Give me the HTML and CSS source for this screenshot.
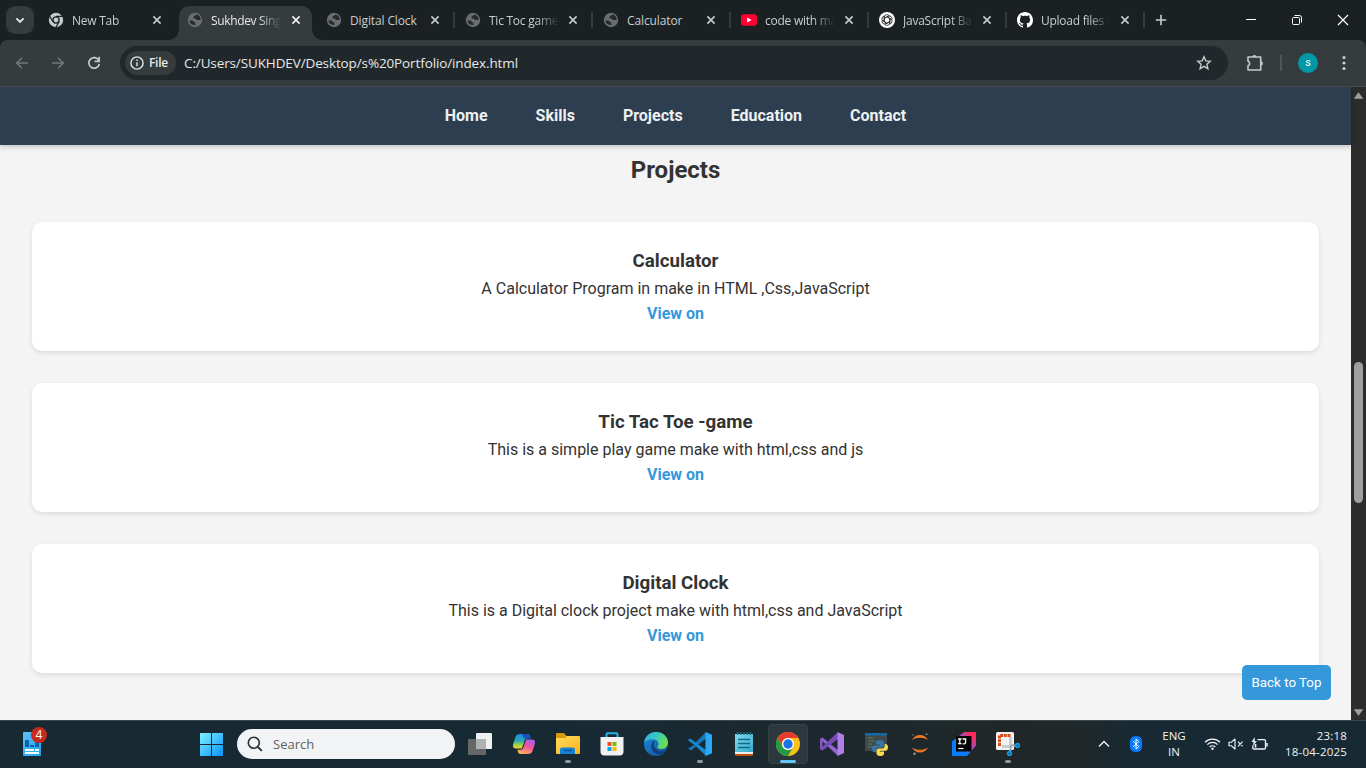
FILE: index.html
```html
<!DOCTYPE html>
<html lang="en">
<head>
<meta charset="utf-8">
<title>Sukhdev Singh Portfolio</title>
<link rel="stylesheet" href="styles.css">
</head>
<body>
<svg class="defs" width="0" height="0">
  <defs>
    <linearGradient id="gWin" x1="0" y1="0" x2="1" y2="1"><stop offset="0" stop-color="#7df3ff"/><stop offset="1" stop-color="#0a90fb"/></linearGradient>
    <linearGradient id="gWidget" x1="0" y1="0" x2="1" y2="1"><stop offset="0" stop-color="#62bdf6"/><stop offset="1" stop-color="#1ba4ec"/></linearGradient>
    <linearGradient id="gCopL" x1="0" y1="0" x2="0" y2="1"><stop offset="0" stop-color="#198fe8"/><stop offset=".45" stop-color="#25a7b5"/><stop offset=".75" stop-color="#9bd34b"/><stop offset="1" stop-color="#f6d22b"/></linearGradient>
    <linearGradient id="gCopR" x1="0.8" y1="0" x2="0.3" y2="1"><stop offset="0" stop-color="#a45bf0"/><stop offset=".5" stop-color="#ee5898"/><stop offset="1" stop-color="#ffb05a"/></linearGradient>
    <linearGradient id="gFold" x1="0" y1="0" x2="1" y2="1"><stop offset="0" stop-color="#ffdc62"/><stop offset="1" stop-color="#fbb318"/></linearGradient>
    <linearGradient id="gEdge1" x1="0" y1="0" x2="1" y2=".5"><stop offset="0" stop-color="#2dabeb"/><stop offset=".5" stop-color="#36c9c0"/><stop offset="1" stop-color="#69df54"/></linearGradient>
    <linearGradient id="gEdge2" x1="0" y1="0" x2="1" y2="1"><stop offset="0" stop-color="#1c8fe0"/><stop offset="1" stop-color="#114a91"/></linearGradient>
    <linearGradient id="gNote" x1="0" y1="0" x2="1" y2="1"><stop offset="0" stop-color="#83dcf0"/><stop offset="1" stop-color="#33a9c9"/></linearGradient>
    <linearGradient id="gIj" x1="0" y1="1" x2="1" y2="0"><stop offset=".35" stop-color="#087cfa"/><stop offset=".6" stop-color="#a64ac4"/><stop offset=".85" stop-color="#fe2857"/></linearGradient>
    <symbol id="close" viewBox="0 0 10 10"><path d="M1.4 1.4l7.2 7.2M8.6 1.4L1.4 8.6" fill="none" stroke="currentColor" stroke-width="1.6"/></symbol>
    <symbol id="globe" viewBox="0 0 16 16"><circle cx="8" cy="8" r="7.2" fill="#696c70"/><path d="M2.4 8.600h2.800c1 0 1.600.8 1.600 1.700h1.500v2.600c-3 .6-5.600-1.300-5.900-4.300zM9.300 2.500C8.800 4 6.900 3.600 6.400 4.900c-.4 1.200.6 1.600 1.800 1.600 1 0 .9 1.600 2.200 1.600h3.200C14 5.400 12 3 9.300 2.500z" fill="#262c2e"/></symbol>
  </defs>
</svg>

<header class="tabstrip">
  <button class="tab-search"><svg width="10" height="7" viewBox="0 0 10 7"><path d="M1.400 1.300L5 4.900l3.600-3.600" fill="none" stroke="#e6e9ea" stroke-width="1.800"/></svg></button>
  <div class="tabs">
    <div class="tab wide">
      <svg class="fav" viewBox="0 0 16 16"><circle cx="8" cy="8" r="7.200" fill="#c5cbce"/><circle cx="8" cy="8" r="3.700" fill="#1b2123"/><circle cx="8" cy="8" r="2.400" fill="#c5cbce"/><path d="M8 4.400h6.600M4.900 9.800L1.700 4.300M11.100 9.800L7.900 15.300" stroke="#1b2123" stroke-width="1.200"/></svg>
      <span class="title">New Tab</span><svg class="x"><use href="#close"/></svg>
    </div>
    <div class="tab wide active"><svg class="fav"><use href="#globe"/></svg><span class="title">Sukhdev Sing</span><svg class="x"><use href="#close"/></svg></div>
    <div class="tab wide"><svg class="fav"><use href="#globe"/></svg><span class="title full">Digital Clock</span><svg class="x"><use href="#close"/></svg></div>
    <div class="tab sep"><svg class="fav"><use href="#globe"/></svg><span class="title">Tic Toc game</span><svg class="x"><use href="#close"/></svg></div>
    <div class="tab sep"><svg class="fav"><use href="#globe"/></svg><span class="title full">Calculator</span><svg class="x"><use href="#close"/></svg></div>
    <div class="tab sep"><svg class="fav" viewBox="0 0 16 16"><rect y="2.200" width="16" height="11.600" rx="3" fill="#ff0033"/><path d="M6.200 5.500v5L10.600 8z" fill="#fff"/></svg><span class="title">code with ma</span><svg class="x"><use href="#close"/></svg></div>
    <div class="tab sep"><svg class="fav" viewBox="0 0 16 16"><circle cx="8" cy="8" r="8" fill="#fff"/><g fill="none" stroke="#222" stroke-width=".8"><path id="knot" d="M5.300 8.900V5.200a2.700 2.700 0 0 1 5-1.300M5.300 6.300L8.500 4.400a2.600 2.600 0 0 1 1.500-.3"/><use href="#knot" transform="rotate(60 8 8)"/><use href="#knot" transform="rotate(120 8 8)"/><use href="#knot" transform="rotate(180 8 8)"/><use href="#knot" transform="rotate(240 8 8)"/><use href="#knot" transform="rotate(300 8 8)"/></g></svg><span class="title">JavaScript Ba</span><svg class="x"><use href="#close"/></svg></div>
    <div class="tab sep"><svg class="fav" viewBox="0 0 16 16"><path fill="#fff" d="M8 0C3.580 0 0 3.580 0 8c0 3.540 2.290 6.530 5.470 7.590.4.070.55-.17.55-.38 0-.19-.01-.82-.01-1.490-2.010.37-2.530-.49-2.690-.94-.09-.23-.48-.94-.82-1.130-.28-.15-.68-.52-.01-.53.63-.01 1.080.58 1.230.82.72 1.210 1.870.87 2.330.66.07-.52.28-.87.51-1.070-1.780-.2-3.640-.89-3.640-3.950 0-.87.31-1.590.82-2.150-.08-.2-.36-1.020.08-2.120 0 0 .67-.21 2.200.82.64-.18 1.320-.27 2-.27s1.360.09 2 .27c1.530-1.040 2.200-.82 2.200-.82.44 1.100.16 1.920.08 2.120.51.56.82 1.270.82 2.150 0 3.070-1.870 3.750-3.650 3.950.29.25.54.73.54 1.480 0 1.070-.01 1.930-.01 2.200 0 .21.15.46.55.38A8.010 8.010 0 0016 8c0-4.420-3.580-8-8-8z"/></svg><span class="title">Upload files ·</span><svg class="x"><use href="#close"/></svg></div>
    <button class="new-tab sep"><svg width="12" height="12" viewBox="0 0 12 12"><path d="M6 .8v10.400M.8 6h10.400" stroke="#c7cdd0" stroke-width="1.600"/></svg></button>
  </div>
  <div class="window-controls">
    <svg width="12" height="12" viewBox="0 0 12 12"><path d="M1 5.500h10" stroke="#fff"/></svg>
    <svg width="12" height="12" viewBox="0 0 12 12" fill="none" stroke="#fff"><rect x="1.500" y="3.500" width="7" height="7" rx="1"/><path d="M3.500 1.500h5a2 2 0 0 1 2 2v5"/></svg>
    <svg width="12" height="12" viewBox="0 0 12 12"><path d="M1 1l10 10M11 1L1 11" stroke="#fff" stroke-width="1.200"/></svg>
  </div>
</header>

<div class="toolbar">
  <svg class="nav-icon" viewBox="0 0 16 16"><path d="M14 8H3M8 2.700L2.700 8 8 13.300" fill="none" stroke="#74797b" stroke-width="1.500"/></svg>
  <svg class="nav-icon" viewBox="0 0 16 16"><path d="M2 8h11M8 2.700L13.300 8 8 13.300" fill="none" stroke="#74797b" stroke-width="1.500"/></svg>
  <svg class="nav-icon" viewBox="0 0 16 16"><path d="M12.900 5.600A5.300 5.300 0 1 0 13.300 9" fill="none" stroke="#c7cdd0" stroke-width="1.700"/><path d="M13.100 1.800v4.600H8.600" fill="none" stroke="#c7cdd0" stroke-width="1.700"/></svg>
  <div class="omnibox">
    <span class="chip"><svg width="14" height="14" viewBox="0 0 14 14"><circle cx="7" cy="7" r="6.100" fill="none" stroke="#dfe3e4" stroke-width="1.400"/><path d="M7 6.200v4M7 3.500v1.500" stroke="#dfe3e4" stroke-width="1.400"/></svg><span class="chip-label">File</span></span>
    <span class="url">C:/Users/SUKHDEV/Desktop/s%20Portfolio/index.html</span>
    <svg class="star" width="16" height="16" viewBox="0 0 16 16"><path d="M8 1.800l1.800 4.100 4.500.4-3.400 3 1 4.400L8 11.400l-3.900 2.300 1-4.400-3.400-3 4.500-.4z" fill="none" stroke="#c7c9c9" stroke-width="1.400"/></svg>
  </div>
  <div class="toolbar-right">
    <svg width="18" height="18" viewBox="0 0 18 18"><path d="M2 3h12.700v13H2v-4.200a2.400 2.400 0 0 0 0-4.600z" fill="none" stroke="#c4cacd" stroke-width="1.600" stroke-linejoin="round"/><path d="M14.700 7.200a2.200 2.200 0 0 1 0 4.400zM6.300 3a2.100 2.100 0 0 1 4.200 0z" fill="#c4cacd"/></svg>
    <i class="divider"></i>
    <span class="avatar">s</span>
    <svg width="4" height="16" viewBox="0 0 4 16" fill="#c7cdd0"><circle cx="2" cy="2.500" r="1.600"/><circle cx="2" cy="8" r="1.600"/><circle cx="2" cy="13.500" r="1.600"/></svg>
  </div>
</div>

<div class="viewport">
  <div class="page">
    <nav class="site-nav"><a>Home</a><a>Skills</a><a>Projects</a><a>Education</a><a>Contact</a></nav>
    <main class="projects">
      <h2>Projects</h2>
      <article class="card"><h3>Calculator</h3><p>A Calculator Program in make in HTML ,Css,JavaScript</p><a>View on</a></article>
      <article class="card"><h3>Tic Tac Toe -game</h3><p>This is a simple play game make with html,css and js</p><a>View on</a></article>
      <article class="card"><h3>Digital Clock</h3><p>This is a Digital clock project make with html,css and JavaScript</p><a>View on</a></article>
    </main>
    <button class="to-top">Back to Top</button>
  </div>
  <div class="scrollbar">
    <svg width="9" height="7" viewBox="0 0 9 7"><path d="M4.500.5L8.800 6.500H.2z" fill="#9f9f9f" stroke="#9f9f9f" stroke-width=".5" stroke-linejoin="round"/></svg>
    <i class="thumb"></i>
    <svg width="9" height="7" viewBox="0 0 9 7"><path d="M4.500 6.500L8.800.5H.2z" fill="#9f9f9f" stroke="#9f9f9f" stroke-width=".5" stroke-linejoin="round"/></svg>
  </div>
</div>

<footer class="taskbar">
  <div class="widgets">
    <svg width="18" height="24" viewBox="0 0 18 24"><rect width="18" height="24" rx="1" fill="url(#gWidget)"/><path d="M2 8h4v7H2zM7 13h4v2H7zM12 10h4v5h-4z" fill="#0864b0"/><path d="M2 17h9v2H2zM12 17h4v2h-4zM2 20h14v2H2z" fill="#f4fbff"/></svg>
    <span class="badge">4</span>
  </div>
  <svg class="start" width="23" height="23" viewBox="0 0 23 23"><path d="M0 0h11v11H0zM12 0h11v11H12zM0 12h11v11H0zM12 12h11v11H12z" fill="url(#gWin)"/></svg>
  <div class="search"><svg width="16" height="16" viewBox="0 0 16 16"><circle cx="6.800" cy="6.800" r="5.500" fill="none" stroke="#2c2d2e" stroke-width="1.600"/><path d="M10.800 10.800l4 4" stroke="#2c2d2e" stroke-width="1.900"/></svg><span>Search</span></div>
  <div class="apps">
    <div class="app"><svg viewBox="0 0 24 24"><rect x="8" y="1" width="16" height="16" rx="1" fill="#eff0f0"/><rect x="0" y="7" width="18" height="16" rx="1" fill="#646667"/><path d="M8 7h10v10H8z" fill="#b0b1b1"/></svg></div>
    <div class="app"><svg viewBox="0 0 24 24"><path d="M8 2h7.500c1.500 0 2.200 1 2.500 2l.7 2.300H15c-1.300 0-2 .8-2.400 2L10 16.500H4c-2.400 0-3.600-1.500-2.900-4L3.400 5C4.100 3 5.500 2 8 2z" fill="url(#gCopL)"/><path d="M9 2h6.500c1.500 0 2.200 1 2.500 2l.7 2.300H13C10.500 6.300 11.500 2.500 9 2z" fill="#174ec1"/><path d="M16 22H8.500C7 22 6.300 21 6 20l-.7-2.300H9c1.300 0 2-.8 2.400-2L14 7.500h6c2.400 0 3.600 1.500 2.900 4L20.600 19c-.7 2-2.100 3-4.600 3z" fill="url(#gCopR)"/></svg></div>
    <div class="app running"><svg viewBox="0 0 24 24"><path d="M0 2q0-1 1-1h7l2.500 3H23v5H0z" fill="#d89808"/><path d="M0 7q0-1 1-1h8l2-2h12q1 0 1 1v16q0 1-1 1H1q-1 0-1-1z" fill="url(#gFold)"/><path d="M4 22v-4.500q0-2 2-2h11q2 0 2 2V22z" fill="#1583d1"/><path d="M8 18.500h8" stroke="#0857a0" stroke-width="1.500"/></svg></div>
    <div class="app"><svg viewBox="0 0 24 24"><path d="M6.500 7V2q0-.8.800-.8h9.400q.8 0 .8.800v5" fill="none" stroke="#27aee8" stroke-width="2"/><path d="M.5 5h23v14.500q0 4-4 4h-15q-4 0-4-4z" fill="#f1f1f3"/><path fill="#f25022" d="M7.500 10h4v4h-4z"/><path fill="#7fba00" d="M12.500 10h4v4h-4z"/><path fill="#00a4ef" d="M7.500 15h4v4h-4z"/><path fill="#ffb900" d="M12.500 15h4v4h-4z"/></svg></div>
    <div class="app"><svg viewBox="0 0 24 24"><circle cx="12" cy="12" r="12" fill="url(#gEdge2)"/><path d="M.2 10.500C1 4.500 5.600 0 12 0c7 0 12 4.800 12 10.500 0 4-3 6.400-6.400 6.400-2.800 0-4.300-1-4.300-2 0-.7 1.200-1.200 1.200-3 0-2.600-2.500-4.700-6-4.700-4 0-7.500 2-8.300 3.300z" fill="url(#gEdge1)"/><path d="M9.600 9c-3.500 2.600-3 9 1.200 11.800 3.400 2.200 8 1.500 11.200-2.300-3.600 1.700-7.500 1-9.800-1.300C9.500 14.800 9.300 11.500 11 9.300z" fill="#123f80"/><path d="M21.900 18.700l2.600-3.900v7l-5 2c1-.9 2-2.900 2.400-5.100z" fill="#17292f"/></svg></div>
    <div class="app running"><svg viewBox="0 0 24 24"><path d="M0 8.300l2-1.700 5.500 4L18 0v6.500l-15 12-3-2 8-4.500z" fill="#1478bd"/><path d="M0 8.300l2-1.700L18 18v6L7.500 13.800z" fill="#1689d4"/><path d="M17.500 0L24 2.800v18.400L17.500 24z" fill="#2ca9f4"/></svg></div>
    <div class="app"><svg viewBox="0 0 24 24"><path d="M3 20h18v3q0 1-1 1H4q-1 0-1-1z" fill="#b9500d"/><path d="M3 19h18v3H3z" fill="#eee"/><path d="M3 2h18v18H3z" fill="url(#gNote)"/><path d="M5.500 0v3M8.700 0v3M12 0v3M15.300 0v3M18.500 0v3" stroke="#147791" stroke-width="1.400"/><path d="M6 7.500h12M6 11.500h12M6 15.500h12" stroke="#136b88" stroke-width="1.500"/></svg></div>
    <div class="app selected"><svg viewBox="0 0 24 24"><circle cx="12" cy="12" r="12" fill="#fbc116"/><path d="M1.600 6a12 12 0 0 1 20.800 0H12a6 6 0 0 0-5.200 9z" fill="#e33b2e"/><path d="M1.600 6a12 12 0 0 0 10.400 18l5.200-9a6 6 0 0 1-10.400 0z" fill="#229a46"/><circle cx="12" cy="12" r="6" fill="#fff"/><circle cx="12" cy="12" r="4.700" fill="#1a73e8"/></svg></div>
    <div class="app"><svg viewBox="0 0 24 24"><path d="M0 7l2.500-1.500L18 18v6z" fill="#9262d0"/><path d="M0 7l2.500-1.500V18.500L0 17z" fill="#8456c4"/><path d="M0 17L18 0v7L2.500 18.500z" fill="#794cb5"/><path d="M17.500 0L24 3v18l-6.500 3z" fill="#b17eea"/></svg></div>
    <div class="app"><svg viewBox="0 0 24 24"><path d="M1 1h22v18H1z" fill="#42484a"/><path d="M1 1h22v2.500H1z" fill="#1369a8"/><path d="M4 6h5M4 9h7M4 12h4M4 15h5" stroke="#568058" stroke-width="1"/><path d="M15.500 8c-3 0-3.500 1-3.500 3v1.500h4v1h-5.500c-2 0-2.500 1.700-2.500 3.500s.8 3.300 2.300 3.300H12V18c0-1.800 1.200-2.500 2.500-2.500h3.500c1.300 0 2-.9 2-2V11c0-2-1.500-3-4.500-3z" fill="#3776ab"/><path d="M16.500 24c3 0 3.500-1 3.500-3v-1.500h-4v-.8h5.200c2 0 2.800-1.600 2.800-3.500s-.8-3.200-2.500-3.200h-.8v2c0 1.600-1 2.500-2.300 2.500H15c-1.300 0-2.500.9-2.500 2.300V21c0 2 1 3 4 3z" fill="#ffd94b"/></svg></div>
    <div class="app"><svg viewBox="0 0 24 24"><path d="M4 8c2-3.400 4.700-5 8-5s6 1.600 8 5c-2.500-1.600-5-2.300-8-2.300S6.500 6.400 4 8zM4 15.500c2 3.400 4.700 5 8 5s6-1.600 8-5c-2.500 1.600-5 2.300-8 2.300s-5.500-.7-8-2.300z" fill="#f37726"/><circle cx="18.500" cy="2.300" r="1" fill="#7f8588"/><circle cx="6.500" cy="21.700" r="1.200" fill="#9b9ea0"/><circle cx="5" cy="3" r=".8" fill="#72777a"/></svg></div>
    <div class="app"><svg viewBox="0 0 24 24"><path d="M0 9.500L11.500.5Q12 0 13 0h10q1 0 1 1v12q0 .6-.4 1L16 23q-.8 1-1.600 1H1q-1 0-1-1z" fill="url(#gIj)"/><path d="M4 4h15.500v15.500H4z" fill="#050505"/><path d="M6 7h3.600M7.800 7v4.600M6 11.600h3.600M10.600 7h3v3.200q0 1.600-1.600 1.600h-1.200" fill="none" stroke="#fff" stroke-width="1.300"/><path d="M6.300 16.500h5.200" stroke="#fff" stroke-width="1.200"/></svg></div>
    <div class="app running"><svg viewBox="0 0 24 24"><rect width="18" height="18" rx="1.500" fill="#f2f2f3"/><path d="M3.500 14V3.500H15" fill="none" stroke="#d94b19" stroke-width="3" stroke-dasharray="3 .7"/><path d="M14.500 5v9.500H6" fill="none" stroke="#c3c7cb" stroke-width="2.600"/><path d="M15 13l5 1M15 14l-1 6" stroke="#9babb3" stroke-width="2"/><circle cx="21.500" cy="13.500" r="1.700" fill="none" stroke="#1697e0" stroke-width="2"/><circle cx="13.500" cy="21.500" r="1.700" fill="none" stroke="#1697e0" stroke-width="2"/></svg></div>
  </div>
  <div class="tray">
    <svg width="12" height="8" viewBox="0 0 12 8"><path d="M1 6.500l5-5 5 5" fill="none" stroke="#f2f4f5" stroke-width="1.400"/></svg>
    <svg class="bt" width="12" height="16" viewBox="0 0 12 16"><rect width="12" height="16" rx="5.500" fill="#087dfb"/><path d="M3.200 5.200l5.600 5.500L6 13V3l2.800 2.400-5.600 5.400" fill="none" stroke="#fff" stroke-width="1"/></svg>
    <div class="lang"><span>ENG</span><span>IN</span></div>
    <svg class="wifi" width="17" height="14" viewBox="0 0 17 14"><path d="M1 5.200a10.700 10.700 0 0 1 15 0M3.300 7.600a7.400 7.400 0 0 1 10.400 0M5.700 10a4 4 0 0 1 5.600 0" fill="none" stroke="#f2f4f5" stroke-width="1.200"/><circle cx="8.500" cy="11.800" r="1.200" fill="#f2f4f5"/></svg>
    <svg class="sound" width="16" height="12" viewBox="0 0 16 12"><path d="M1 4.200h2.500L7 1v10L3.500 7.800H1zM10 3.700l4.600 4.600M14.600 3.700L10 8.300" fill="none" stroke="#f2f4f5" stroke-width="1.100" stroke-linejoin="round"/></svg>
    <svg class="battery" width="17" height="14" viewBox="0 0 17 14"><path d="M6.500 2.600h6.800q1.200 0 1.200 1.200v6.900q0 1.300-1.200 1.300H3q-1.200 0-1.200-1.200V8.500" fill="none" stroke="#f2f4f5" stroke-width="1.300"/><path d="M16 6v3.500" stroke="#f2f4f5" stroke-width="1.500"/><path d="M3.700 0L.6 5h2.200L1.600 9 6 4.200H3.700z" fill="#f2f4f5"/><path d="M4.500 7v3.500" stroke="#f2f4f5" stroke-width="1.700"/></svg>
    <div class="clock"><span>23:18</span><span>18-04-2025</span></div>
  </div>
</footer>
</body>
</html>
```
FILE: styles.css
```css
* { box-sizing: border-box; }
body {
  margin: 0;
  width: 1366px;
  height: 768px;
  overflow: hidden;
  display: flex;
  flex-direction: column;
  background: #1b2123;
  font-family: "Open Sans", "Noto Sans", sans-serif;
}
button { border: 0; padding: 0; background: none; font: inherit; }
svg { display: block; flex: none; }
.defs { position: absolute; }

/* Tab strip */
.tabstrip {
  height: 40px;
  flex: none;
  display: flex;
  align-items: center;
  padding-left: 6px;
}
.tab-search {
  width: 28px;
  height: 28px;
  border-radius: 9px;
  background: #363c3e;
  display: grid;
  place-items: center;
}
.tabs { display: flex; height: 40px; margin-left: 6px; align-items: flex-end; }
.tab {
  position: relative;
  width: 138px;
  height: 34px;
  padding: 0 0 6px 8px;
  display: flex;
  align-items: center;
}
.tab.wide { width: 139px; }
.tab.active::before {
  content: "";
  position: absolute;
  inset: 0 6px 0 0;
  background: #363c3e;
  border-radius: 10px 10px 0 0;
}
.tab.active::after {
  content: "";
  position: absolute;
  left: -10px;
  right: -4px;
  bottom: 0;
  height: 10px;
  background:
    radial-gradient(circle at 0 0, transparent 9.500px, #363c3e 10px) left / 10px 10px no-repeat,
    radial-gradient(circle at 100% 0, transparent 9.500px, #363c3e 10px) right / 10px 10px no-repeat;
}
.tab.active > * { position: relative; z-index: 1; }
.sep::before {
  content: "";
  position: absolute;
  left: -4px;
  top: 6px;
  width: 2px;
  height: 16px;
  background: #363c3e;
}
.fav { width: 16px; height: 16px; }
.title {
  width: 70px;
  margin-left: 8px;
  white-space: nowrap;
  font-size: 12px;
  letter-spacing: -0.250px;
  line-height: 18px;
  padding-top: 1px;
  color: #c7cdd0;
  -webkit-mask-image: linear-gradient(90deg, #000 68%, transparent 100%);
  mask-image: linear-gradient(90deg, #000 68%, transparent 100%);
}
.title.full { -webkit-mask-image: none; mask-image: none; letter-spacing: -0.120px; }
.active .title { color: #e6e9ea; letter-spacing: -0.350px; }
.x { width: 10px; height: 10px; margin-left: 9px; color: #c7cdd0; }
.wide .x { margin-left: 10px; }
.active .x { color: #f0f2f2; }
.new-tab { position: relative; width: 24px; height: 28px; margin-bottom: 6px; padding-left: 8px; display: flex; align-items: center; }
.window-controls { display: flex; gap: 34px; margin-left: auto; padding-right: 17px; }

/* Toolbar */
.toolbar {
  height: 47px;
  flex: none;
  display: flex;
  align-items: center;
  padding: 0 20px 1px 14px;
  background: #363c3e;
  border-bottom: 1px solid #4a4b4a;
  border-radius: 8px 8px 0 0;
}
.nav-icon { width: 16px; height: 16px; margin-right: 20px; }
.nav-icon + .nav-icon + .nav-icon { margin-right: 18px; }
.omnibox {
  width: 1108px;
  height: 34px;
  border-radius: 17px;
  background: #20282b;
  display: flex;
  align-items: center;
  padding: 0 16px 0 5px;
}
.chip {
  height: 24px;
  width: 51px;
  border-radius: 12px;
  background: #363c3e;
  display: flex;
  align-items: center;
  gap: 5px;
  padding-left: 5px;
}
.chip-label { color: #e6e9ea; font-size: 12px; font-weight: 600; line-height: 16px; letter-spacing: -0.300px; }
.url { margin-left: 8px; color: #e6e9ea; font-size: 13.500px; line-height: 18px; white-space: nowrap; letter-spacing: -0.120px; }
.star { margin-left: auto; }
.toolbar-right { flex: 1; display: flex; align-items: center; padding-left: 18px; }
.divider { width: 2px; height: 16px; margin-left: 16px; background: #4e5457; }
.avatar {
  width: 20px;
  height: 20px;
  margin: 0 24px 0 16px;
  border-radius: 50%;
  background: #0097a7;
  color: #fff;
  font: 11px/19px Roboto, sans-serif;
  text-align: center;
}

/* Web page */
.viewport { flex: 1; min-height: 0; display: flex; }
.page {
  position: relative;
  flex: 1;
  background: #f4f4f4;
  color: #333;
  font-family: Roboto, sans-serif;
  font-size: 16px;
  line-height: 25.600px;
  text-align: center;
}
.site-nav {
  position: relative;
  height: 58px;
  display: flex;
  justify-content: center;
  align-items: center;
  gap: 48px;
  background: #2c3e50;
  box-shadow: 0 2px 5px rgba(0, 0, 0, .2);
  color: #ecf0f1;
  font-weight: 700;
}
.projects { padding: 6px 32px 0; display: flex; flex-direction: column; gap: 32px; }
.projects h2 { margin: 0; font-size: 24px; line-height: 39px; font-weight: 700; }
.card {
  height: 129px;
  padding: 24px;
  border-radius: 10px;
  background: #fff;
  box-shadow: 0 2px 5px rgba(0, 0, 0, .1);
}
.card h3 { margin: 0 0 -1px; font-size: 18.720px; line-height: 31px; font-weight: 700; }
.card p { margin: 0; line-height: 25px; }
.card a { display: block; line-height: 25px; color: #3498db; font-weight: 700; }
.to-top {
  position: absolute;
  right: 20px;
  bottom: 20px;
  width: 89px;
  height: 35px;
  border-radius: 5px;
  background: #3498db;
  color: #fff;
  font: 13.333px Roboto, sans-serif;
}
.scrollbar {
  width: 15px;
  padding: 5px 0 4px;
  background: #2c2c2c;
  display: flex;
  flex-direction: column;
  align-items: center;
}
.thumb { width: 9px; height: 141px; margin: 263px 0 auto; border-radius: 5px; background: #9f9f9f; }

/* Taskbar */
.taskbar {
  height: 48px;
  flex: none;
  display: flex;
  align-items: center;
  padding-bottom: 1px;
  border-top: 1px solid #3c4b50;
  background: linear-gradient(90deg, #172a34 0, #172a34 560px, #1d282c 860px, #222727 1060px, #172a33 1130px, #172a33);
  color: #f2f4f5;
}
.widgets { position: relative; margin-left: 23px; width: 18px; }
.badge {
  position: absolute;
  left: 8px;
  top: -5px;
  width: 16px;
  height: 16px;
  border-radius: 50%;
  background: #c42b1c;
  color: #fff;
  font-size: 12px;
  line-height: 16px;
  text-align: center;
}
.start { margin-left: 159px; }
.search {
  width: 218px;
  height: 30px;
  margin: 0 3px 0 14px;
  padding-left: 10px;
  border-radius: 15px;
  background: #f2f3f5;
  display: flex;
  align-items: center;
  gap: 10px;
  color: #606264;
  font-size: 13px;
  line-height: 18px;
}
.apps { display: flex; }
.app { position: relative; width: 44px; height: 40px; display: grid; place-items: center; }
.app > svg { width: 24px; height: 24px; }
.running::after, .selected::after {
  content: "";
  position: absolute;
  bottom: 1px;
  left: 19px;
  width: 6px;
  height: 3px;
  border-radius: 2px;
  background: #92999c;
}
.selected::after { left: 14px; width: 16px; background: #5fc4fa; }
.selected::before {
  content: "";
  position: absolute;
  inset: 0 2px;
  border: 1px solid #344145;
  border-radius: 4px;
  background: #2c383d;
}
.selected > svg { position: relative; }
.tray { flex: 1; display: flex; align-items: center; padding: 0 19px 0 68px; font-size: 11.500px; line-height: 16px; }
.bt { margin-left: 20px; }
.lang { width: 32px; margin-left: 16px; display: flex; flex-direction: column; align-items: center; }
.wifi { margin-left: 14px; }
.sound { margin-left: 7px; }
.battery { margin-left: 7px; }
.clock { margin-left: auto; display: flex; flex-direction: column; align-items: flex-end; letter-spacing: 0.200px; }
```
